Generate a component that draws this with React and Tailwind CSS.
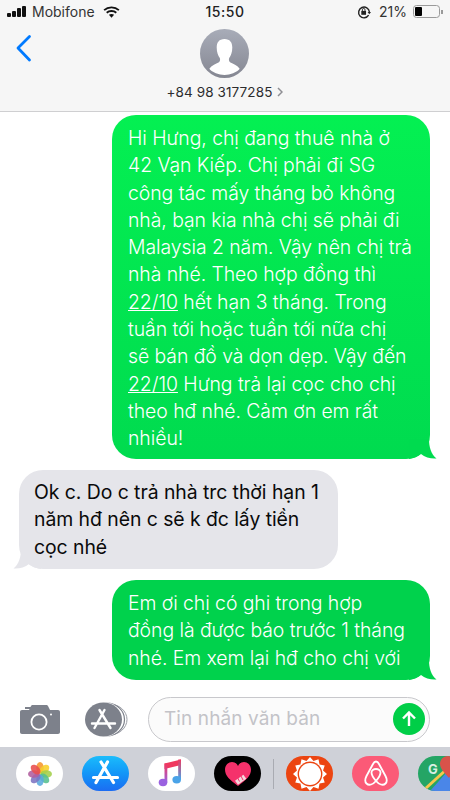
import React from 'react';

const FONT = 'font-["Inter","Noto_Sans",sans-serif]';

const StatusBar = () => (
    <div className="flex items-center justify-between h-[23px] pl-[7px] pr-[7px] text-[#1c1c1e] text-[14px] leading-none">
        <div className="flex items-center w-[150px]">
            <div className="flex items-end gap-[1px] h-[11px] w-[20px]">
                <div className="w-[4px] h-[4px] bg-[#111] rounded-[1px]"></div>
                <div className="w-[4px] h-[6px] bg-[#111] rounded-[1px]"></div>
                <div className="w-[4px] h-[9px] bg-[#111] rounded-[1px]"></div>
                <div className="w-[4px] h-[11px] bg-[#111] rounded-[1px]"></div>
            </div>
            <span className="ml-[5px] text-[#333]">Mobifone</span>
            <svg width="17" height="12" viewBox="0 0 18 13" className="ml-[8px]">
                <path d="M1 4.5C5.5 .5 12.5 .5 17 4.5" fill="none" stroke="#111" strokeWidth="2" />
                <path d="M3.8 7.3C6.6 4.8 11.4 4.8 14.2 7.3" fill="none" stroke="#111" strokeWidth="2" />
                <path d="M6.2 9.6L9 12.6L11.8 9.6C10 8.2 8 8.2 6.2 9.6Z" fill="#111" />
            </svg>
        </div>
        <span className="text-[#222] font-medium tracking-[0.5px]">15:50</span>
        <div className="flex items-center justify-end w-[150px]">
            <svg width="14" height="14" viewBox="0 0 13 13">
                <path d="M10.8 9.5A5 5 0 1 1 11.5 6.5" fill="none" stroke="#222" strokeWidth="1.3" />
                <path d="M9.8 6.5h3.2l-1.6 2z" fill="#222" />
                <rect x="4" y="5.5" width="4.4" height="3.6" fill="#222" />
                <path d="M5 5.5V4.4a1.2 1.2 0 0 1 2.4 0v1.1" fill="none" stroke="#222" strokeWidth="0.9" />
            </svg>
            <span className="ml-[8px] text-[#333]">21%</span>
            <div className="ml-[6px] w-[27px] h-[13px] rounded-[3.5px] border border-[#9a9a9a] p-[1px]">
                <div className="w-[7px] h-full bg-black rounded-[1px]"></div>
            </div>
            <div className="ml-[1px] w-[2px] h-[4px] bg-[#9a9a9a]"></div>
        </div>
    </div>
);

const Header = () => (
    <div className="relative h-[88px] flex flex-col items-center shrink-0">
        <svg width="18" height="28" viewBox="0 0 18 28" className="absolute left-[14px] top-[11px]">
            <path d="M15.5 2.5L4 14L15.5 26" fill="none" stroke="#007aff" strokeWidth="2.8" strokeLinecap="round" strokeLinejoin="round" />
        </svg>
        <svg width="49" height="49" viewBox="0 0 49 49" className="mt-[6px] mr-[1px]">
            <defs>
                <linearGradient id="avatarBg" x1="0" y1="0" x2="0" y2="1">
                    <stop offset="0" stopColor="#a8acb8" />
                    <stop offset="1" stopColor="#858792" />
                </linearGradient>
                <clipPath id="avatarClip">
                    <circle cx="24.5" cy="23.5" r="22.5" />
                </clipPath>
            </defs>
            <circle cx="24.5" cy="24.5" r="24.5" fill="url(#avatarBg)" />
            <path clipPath="url(#avatarClip)" d="M24.5 10C19 10 16.7 13.5 16.7 18.5C16.7 23 18 26.5 19.8 29C20.4 31 20 32.5 18.5 33.5C16 35 12 36 9.5 39.5L9.5 49H39.5V39.5C37 36 33 35 30.5 33.5C29 32.5 28.6 31 29.2 29C31 26.5 32.3 23 32.3 18.5C32.3 13.5 30 10 24.5 10Z" fill="#fff" />
        </svg>
        <div className="flex items-center mt-[5px] text-[13.5px] leading-[18px] text-[#2c2c2e] tracking-[0.1px]">
            <span>+84 98 3177285</span>
            <svg width="6" height="10" viewBox="0 0 6 10" className="ml-[5px]">
                <path d="M1 1L5 5L1 9" fill="none" stroke="#8e8e93" strokeWidth="1.5" />
            </svg>
        </div>
    </div>
);

const Lines = ({ lines }) => lines.map((line) => <div key={line} className="whitespace-nowrap">{line}</div>);

// corner tail, drawn pointing right; flip with -scale-x-100 for received bubbles
const Tail = ({ color, className }) => (
    <svg width="30" height="20" viewBox="0 0 30 20" className={`absolute bottom-0 ${className}`}>
        <path d="M20 0C20 8 22 15 27.5 19.5C22.5 20 16 18.5 12 15C9 17.5 5 19.5 0 20L0 0Z" fill={color} />
    </svg>
);

const SentBubble = ({ children, className, tailColor }) => (
    <div className={`relative self-end mr-[20px] w-[318px] rounded-[24px] pl-[16px] pt-[10px] text-white font-[350] ${className}`}>
        <Tail color={tailColor} className="right-[-9px]" />
        <div className="relative">{children}</div>
    </div>
);

const Messages = () => (
    <div className="flex-1 min-h-0 overflow-hidden bg-white flex flex-col pt-[3px] text-[19.4px] leading-[27.3px] tracking-[-0.05px]">
        <SentBubble className="h-[344px] shrink-0 bg-gradient-to-b from-[#04f052] to-[#00db4f]" tailColor="#00db4f">
            <Lines lines={[
                'Hi Hưng, chị đang thuê nhà ở',
                '42 Vạn Kiếp. Chị phải đi SG',
                'công tác mấy tháng bỏ không',
                'nhà, bạn kia nhà chị sẽ phải đi',
                'Malaysia 2 năm. Vậy nên chị trả',
                'nhà nhé. Theo hợp đồng thì',
            ]} />
            <div><span className="underline">22/10</span> hết hạn 3 tháng. Trong</div>
            <Lines lines={['tuần tới hoặc tuần tới nữa chị', 'sẽ bán đồ và dọn dẹp. Vậy đến']} />
            <div><span className="underline">22/10</span> Hưng trả lại cọc cho chị</div>
            <Lines lines={['theo hđ nhé. Cảm ơn em rất', 'nhiều!']} />
        </SentBubble>

        <div className="relative ml-[19px] mt-[11px] w-[319px] h-[99px] shrink-0 rounded-[24px] bg-[#e5e5ea] pl-[15px] pt-[9px] text-[#0a0a0a]">
            <Tail color="#e5e5ea" className="left-[-8px] -scale-x-100" />
            <div className="relative">
                <Lines lines={['Ok c. Do c trả nhà trc thời hạn 1', 'năm hđ nên c sẽ k đc lấy tiền', 'cọc nhé']} />
            </div>
        </div>

        <SentBubble className="mt-[11px] h-[100px] shrink-0 bg-[#00d24c]" tailColor="#00d24c">
            <Lines lines={['Em ơi chị có ghi trong hợp', 'đồng là được báo trước 1 tháng', 'nhé. Em xem lại hđ cho chị với']} />
        </SentBubble>
    </div>
);

const InputBar = () => (
    <div className="h-[67px] shrink-0 bg-white flex items-center pt-[11px]">
        <svg width="40" height="29" viewBox="0 0 40 29" className="ml-[20px]">
            <rect x="5" y="2" width="6" height="2" fill="#7d818b" />
            <path fill="#7d818b" d="M2 5H9L11 1C11.3 .4 11.8 0 12.5 0H26.5C27.2 0 27.7 .4 28 1L30 5H38C39.2 5 40 5.8 40 7V27C40 28.2 39.2 29 38 29H2C.8 29 0 28.2 0 27V7C0 5.8 .8 5 2 5Z" />
            <circle cx="19" cy="17" r="7.6" fill="none" stroke="#fff" strokeWidth="1.8" />
            <circle cx="31" cy="9.5" r="1" fill="#fff" />
        </svg>
        <svg width="43" height="35" viewBox="0 0 43 35" className="ml-[25px]">
            <ellipse cx="24" cy="17.5" rx="18" ry="15.5" fill="#fff" stroke="#9a9da5" strokeWidth="1" />
            <ellipse cx="21.5" cy="17.5" rx="18" ry="16.5" fill="#fff" stroke="#7d818b" strokeWidth="1.2" />
            <ellipse cx="18.5" cy="17.5" rx="19" ry="17.5" fill="#fff" />
            <ellipse cx="18.5" cy="17.5" rx="18.5" ry="17" fill="#7d818b" />
            <path d="M19.5 8L9.5 26M14.5 8L25.5 26M7 21.5H30" fill="none" stroke="#fff" strokeWidth="2.4" strokeLinecap="round" />
        </svg>
        <div className="ml-[20px] w-[282px] h-[45px] rounded-[23px] border border-[#c8c8cc] bg-[#fbfbfb] flex items-center justify-between pl-[15px] pr-[4px]">
            <span className="text-[19px] text-[#c3c3c8] tracking-[0.1px]">Tin nhắn văn bản</span>
            <div className="w-[32px] h-[32px] rounded-full bg-[#00ce47] flex items-center justify-center">
                <svg width="18" height="18" viewBox="0 0 18 18">
                    <path d="M9 16V2.5M3 8.5L9 2.5L15 8.5" fill="none" stroke="#fff" strokeWidth="2.4" />
                </svg>
            </div>
        </div>
    </div>
);

const DockIcon = ({ className, children }) => (
    <div className={`w-[47px] h-[35px] shrink-0 rounded-[17.5px] flex items-center justify-center overflow-hidden ${className}`}>
        {children}
    </div>
);

const petals = ['#f5962e', '#f7cf2a', '#a3cf4a', '#55bf8e', '#5aa9dd', '#7d73c2', '#b05d9e', '#e84d4d'];

// 12 point sun for the orange app
const sunPoints = Array.from({ length: 24 }, (_, i) => {
    const r = i % 2 === 0 ? 17 : 13.5;
    const a = (i * Math.PI) / 12;
    return `${(17 + r * Math.sin(a)).toFixed(2)},${(17 - r * Math.cos(a)).toFixed(2)}`;
}).join(' ');

const Dock = () => (
    <div className="h-[53px] shrink-0 bg-[#cfd1d8] flex items-center pl-[16px] overflow-hidden">
        <DockIcon className="bg-white">
            <svg width="26" height="26" viewBox="0 0 26 26">
                {petals.map((c, i) => (
                    <ellipse key={c} cx="13" cy="6.8" rx="3.8" ry="5.8" fill={c} opacity="0.88" transform={`rotate(${i * 45} 13 13)`} />
                ))}
            </svg>
        </DockIcon>
        <DockIcon className="ml-[19px] bg-gradient-to-b from-[#1cbcfb] to-[#1c6cf2]">
            <svg width="47" height="35" viewBox="0 0 47 35">
                <path d="M25.5 6L14 26.5M19 6L31.5 26.5M11.5 21.5H35.5" fill="none" stroke="#fff" strokeWidth="3.2" strokeLinecap="round" />
            </svg>
        </DockIcon>
        <DockIcon className="ml-[19px] bg-white">
            <svg width="47" height="35" viewBox="0 0 47 35">
                <defs>
                    <linearGradient id="noteLeft" x1="0" y1="0" x2="0" y2="1">
                        <stop offset="0" stopColor="#f0385f" />
                        <stop offset="1" stopColor="#9a62e0" />
                    </linearGradient>
                    <linearGradient id="noteRight" x1="0" y1="0" x2="0" y2="1">
                        <stop offset="0" stopColor="#f0385f" />
                        <stop offset="1" stopColor="#4aa3e8" />
                    </linearGradient>
                </defs>
                <path d="M16.5 7.5L33 3.5V9L16.5 13Z" fill="#f0385f" />
                <rect x="16.5" y="7.5" width="2.8" height="19" fill="url(#noteLeft)" />
                <rect x="30.2" y="3.5" width="2.8" height="20" fill="url(#noteRight)" />
                <ellipse cx="15" cy="26.5" rx="4.3" ry="3.7" fill="#9a62e0" />
                <ellipse cx="28.7" cy="23.7" rx="4.3" ry="3.7" fill="#4aa3e8" />
            </svg>
        </DockIcon>
        <DockIcon className="ml-[19px] bg-black">
            <svg width="28" height="26" viewBox="0 0 28 26">
                <path d="M14 25C6 19 1 15 1 8.5C1 4 4.5 1 8 1C10.5 1 13 2.5 14 5C15 2.5 17.5 1 20 1C23.5 1 27 4 27 8.5C27 15 22 19 14 25Z" fill="#f5316b" />
                <path d="M12 17L21 22" transform="rotate(-65 16 19)" stroke="#f4d7dc" strokeWidth="5" />
                <path d="M13.5 16.5L15.5 20.5M17 15L19 19" stroke="#f5316b" strokeWidth="1" />
            </svg>
        </DockIcon>
        <div className="ml-[12px] w-[1px] h-[30px] bg-[#a9abb2] shrink-0"></div>
        <DockIcon className="ml-[12px] bg-[#ec4511]">
            <svg width="34" height="34" viewBox="0 0 34 34">
                <polygon points={sunPoints} fill="#fff" />
                <circle cx="17" cy="17" r="12.4" fill="#ec4511" />
                <circle cx="17" cy="17" r="11" fill="#fff" />
            </svg>
        </DockIcon>
        <DockIcon className="ml-[19px] bg-[#fb5a77]">
            <svg width="24" height="27" viewBox="0 0 24 27">
                <path d="M12 21C15 24.5 19 26 21.5 23.5C23.5 21.5 23 19 21.5 16L15 4C14 2 13 1.5 12 1.5C11 1.5 10 2 9 4L2.5 16C1 19 .5 21.5 2.5 23.5C5 26 9 24.5 12 21C9 17.5 7.5 14.5 7.5 12.5C7.5 10.5 9.5 9 12 9C14.5 9 16.5 10.5 16.5 12.5C16.5 14.5 15 17.5 12 21Z" fill="none" stroke="#fff" strokeWidth="1.8" />
            </svg>
        </DockIcon>
        <DockIcon className="relative ml-[19px] bg-[#24a565]">
            <svg width="47" height="35" viewBox="0 0 47 35" className="absolute inset-0">
                <path d="M12 35L29 16L47 35Z" fill="#4a86e8" />
                <path d="M7 33L30 12" stroke="#f5c84c" strokeWidth="3" />
                <path d="M30 0C25 0 22 4 22 8C22 13 27 17 31 22C35 17 40 13 40 8C40 4 35 0 30 0Z" fill="#d9534a" />
            </svg>
            <span className="absolute left-[10px] top-[5px] text-[13px] leading-[16px] font-bold text-[#d8efe2]">G</span>
        </DockIcon>
    </div>
);

const App = () => {
    return (
        <div className={`w-[450px] h-[800px] flex flex-col overflow-hidden bg-white ${FONT}`}>
            <div className="shrink-0 h-[112px] bg-[#f6f6f6] border-b border-[#cfcfd1]">
                <StatusBar />
                <Header />
            </div>
            <Messages />
            <InputBar />
            <Dock />
        </div>
    );
};

export default App;
